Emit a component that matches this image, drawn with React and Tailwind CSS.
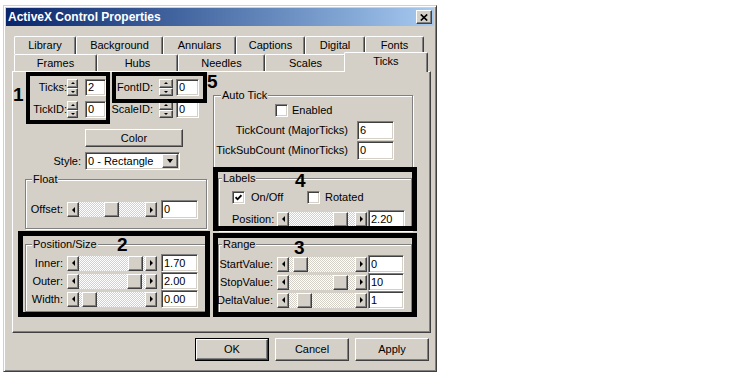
import React from "react";

const raised =
  "border border-t-white border-l-white border-r-[#404040] border-b-[#404040] shadow-[inset_-1px_-1px_0_#808080] bg-[#d4d0c8]";
const sunken =
  "border border-t-[#808080] border-l-[#808080] border-r-white border-b-white shadow-[inset_1px_1px_0_#404040,inset_-1px_-1px_0_#d4d0c8]";

const row1 = [
  ["Library", "w-[62px]"],
  ["Background", "w-[87px]"],
  ["Annulars", "w-[73px]"],
  ["Captions", "w-[69px]"],
  ["Digital", "w-[60px]"],
  ["Fonts", "w-[59px]"],
];
const row2 = [
  ["Frames", "w-[83px]"],
  ["Hubs", "w-[81px]"],
  ["Needles", "w-[87px]"],
  ["Scales", "w-[81px]"],
];

function Tab({ label, w, h }) {
  return (
    <div
      className={
        "shrink-0 flex items-center justify-center border-t border-l border-r border-t-white border-l-white border-r-[#404040] rounded-t-[2px] shadow-[inset_-1px_0_0_#808080] bg-[#d4d0c8] " +
        w +
        " " +
        h
      }
    >
      {label}
    </div>
  );
}

function Label({ w, children, left }) {
  return (
    <span className={"flex whitespace-nowrap shrink-0 " + (left ? "justify-start " : "justify-end ") + w}>
      {children}
    </span>
  );
}

function Field({ className = "", children }) {
  return (
    <div className={sunken + " bg-white shrink-0 flex items-center pl-[2px] " + className}>
      {children}
    </div>
  );
}

function Spin({ w, className = "" }) {
  return (
    <div className={"flex flex-col h-[17px] shrink-0 " + w + " " + className}>
      <div className={raised + " flex-1 flex items-center justify-center"}>
        <div className="w-0 h-0 border-x-[2px] border-x-transparent border-b-[2px] border-b-black" />
      </div>
      <div className={raised + " flex-1 flex items-center justify-center"}>
        <div className="w-0 h-0 border-x-[2px] border-x-transparent border-t-[2px] border-t-black" />
      </div>
    </div>
  );
}

function HScroll({ thumb, className = "" }) {
  return (
    <div className={"flex h-[15px] w-[90px] shrink-0 " + className}>
      <div className={raised + " w-[12px] shrink-0 flex items-center justify-center"}>
        <div className="w-0 h-0 border-y-[3px] border-y-transparent border-r-[3px] border-r-black" />
      </div>
      <div className="flex-1 flex bg-[image:repeating-conic-gradient(#fff_0_25%,#d4d0c8_0_50%)] bg-[length:2px_2px]">
        <div className="shrink-0" style={{ width: thumb - 12 }} />
        <div className={raised + " w-[15px] shrink-0"} />
      </div>
      <div className={raised + " w-[12px] shrink-0 flex items-center justify-center"}>
        <div className="w-0 h-0 border-y-[3px] border-y-transparent border-l-[3px] border-l-black" />
      </div>
    </div>
  );
}

function Check({ on }) {
  return (
    <div className={sunken + " w-[13px] h-[13px] bg-white shrink-0 flex items-center justify-center"}>
      {on && (
        <svg width="7" height="7" viewBox="0 0 7 7">
          <path d="M0.6 3.2 L2.6 5.3 L6.4 1.2" fill="none" stroke="black" strokeWidth="1.8" />
        </svg>
      )}
    </div>
  );
}

function Group({ label, className = "", legend = "ml-[6px]", children }) {
  return (
    <fieldset
      className={
        "min-w-0 border border-[#808080] shadow-[inset_1px_1px_0_#fff,1px_1px_0_#fff] " + className
      }
    >
      <legend className={"px-[1px] leading-[13px] bg-[#d4d0c8] " + legend}>{label}</legend>
      {children}
    </fieldset>
  );
}

function Btn({ children, isDefault }) {
  if (isDefault) {
    return (
      <div className="w-[74px] h-[23px] border border-black">
        <div className={raised + " w-full h-full flex items-center justify-center"}>{children}</div>
      </div>
    );
  }
  return <div className={raised + " w-[74px] h-[23px] flex items-center justify-center"}>{children}</div>;
}

export default function App() {
  return (
    <div className="w-[750px] h-[375px] bg-white pt-[5px] pl-[3px] font-['Liberation_Sans',Arial,sans-serif] text-[11px] text-black leading-none">
      <div className="w-[434px] h-[367px] bg-[#d4d0c8] border border-t-[#d4d0c8] border-l-[#d4d0c8] border-r-[#404040] border-b-[#404040] shadow-[inset_1px_1px_0_#fff,inset_-1px_-1px_0_#808080] p-[2px] flex flex-col">
        {/* Title bar */}
        <div className="h-[18px] shrink-0 flex items-center justify-between bg-linear-to-r from-[#0a246a] to-[#a6caf0] pl-[2px] pr-[2px]">
          <span className="text-white font-bold text-[12px]">ActiveX Control Properties</span>
          <div className={raised + " w-[16px] h-[14px] flex items-center justify-center"}>
            <svg width="8" height="7" viewBox="0 0 8 7">
              <path d="M0.8 0.5 L7.2 6.5 M7.2 0.5 L0.8 6.5" stroke="black" strokeWidth="1.7" />
            </svg>
          </div>
        </div>

        {/* Tabs */}
        <div className="pl-[8px] pt-[10px]">
          <div className="flex h-[18px]">
            {row1.map(([t, w]) => (
              <Tab key={t} label={t} w={w} h="h-[18px]" />
            ))}
          </div>
          <div className="flex h-[17px] items-end">
            {row2.map(([t, w]) => (
              <Tab key={t} label={t} w={w} h="h-[17px]" />
            ))}
            <div className="relative z-10 -ml-[2px] -mb-[1px] w-[84px] h-[20px] shrink-0 flex justify-center pt-[3px] border-t border-l border-r border-t-white border-l-white border-r-[#404040] rounded-t-[2px] shadow-[inset_-1px_0_0_#808080] bg-[#d4d0c8]">
              Ticks
            </div>
          </div>
        </div>

        {/* Panel */}
        <div className="relative ml-[6px] w-[419px] h-[262px] shrink-0 flex border border-t-white border-l-white border-r-[#404040] border-b-[#404040] shadow-[inset_-1px_-1px_0_#808080]">
          {/* Left column */}
          <div className="w-[200px] shrink-0 flex flex-col">
            <div className="mt-[7px] flex flex-col gap-[5px]">
              <div className="flex h-[17px] items-center">
                <Label w="w-[54px]">Ticks:</Label>
                <Spin w="w-[11px]" />
                <Field className="ml-[7px] w-[21px] h-[17px]">2</Field>
                <Label w="w-[47px]">FontID:</Label>
                <Spin w="w-[14px]" className="ml-[6px]" />
                <Field className="ml-[3px] w-[23px] h-[17px]">0</Field>
              </div>
              <div className="flex h-[17px] items-center">
                <Label w="w-[54px]">TickID:</Label>
                <Spin w="w-[11px]" />
                <Field className="ml-[7px] w-[21px] h-[17px]">0</Field>
                <Label w="w-[47px]">ScaleID:</Label>
                <Spin w="w-[14px]" className="ml-[6px]" />
                <Field className="ml-[3px] w-[23px] h-[17px]">0</Field>
              </div>
            </div>

            <div className={raised + " mt-[11px] ml-[72px] w-[98px] h-[18px] flex items-center justify-center"}>
              Color
            </div>

            <div className="mt-[5px] flex h-[18px] items-center">
              <Label w="w-[68px]">Style:</Label>
              <div className={sunken + " ml-[4px] w-[95px] h-[18px] bg-white flex items-center justify-between pl-[2px] pr-[1px]"}>
                <span>0 - Rectangle</span>
                <div className={raised + " w-[16px] h-[14px] flex items-center justify-center"}>
                  <div className="w-0 h-0 border-x-[3.5px] border-x-transparent border-t-[4px] border-t-black" />
                </div>
              </div>
            </div>

            <Group label="Float" className="mt-[3px] ml-[12px] w-[182px]">
              <div className="pt-[14px] pb-[9px] pl-[7px] flex h-[42px] items-start">
                <div className="flex items-center h-[19px]">
                  <Label w="w-[30px]">Offset:</Label>
                  <HScroll thumb={37} className="ml-[4px]" />
                  <Field className="ml-[4px] w-[37px] h-[19px]">0</Field>
                </div>
              </div>
            </Group>

            <Group label="Position/Size" className="mt-[9px] ml-[12px] w-[181px]">
              <div className="pt-[3px] pb-[3px] pl-[7px] flex flex-col">
                {[
                  ["Inner:", 61, "1.70"],
                  ["Outer:", 60, "2.00"],
                  ["Width:", 15, "0.00"],
                ].map(([l, t, v]) => (
                  <div key={l} className="flex h-[18px] items-center">
                    <Label w="w-[30px]">{l}</Label>
                    <HScroll thumb={t} className="ml-[4px]" />
                    <Field className="ml-[4px] w-[37px] h-[18px]">{v}</Field>
                  </div>
                ))}
              </div>
            </Group>
          </div>

          {/* Right column */}
          <div className="w-[204px] shrink-0 flex flex-col">
            <Group label="Auto Tick" className="mt-[17px] w-[200px]" legend="ml-[7px]">
              <div className="pt-[2px] pb-[9px] flex flex-col">
                <div className="flex items-center h-[13px] pl-[61px]">
                  <Check />
                  <span className="ml-[4px]">Enabled</span>
                </div>
                <div className="mt-[4px] flex h-[19px] items-center">
                  <Label w="w-[134px]">TickCount (MajorTicks)</Label>
                  <Field className="ml-[9px] w-[37px] h-[19px]">6</Field>
                </div>
                <div className="mt-[1px] flex h-[19px] items-center">
                  <Label w="w-[134px]">TickSubCount (MinorTicks)</Label>
                  <Field className="ml-[9px] w-[37px] h-[19px]">0</Field>
                </div>
              </div>
            </Group>

            <Group label="Labels" className="mt-[2px] ml-[5px] w-[194px]" legend="ml-[3px]">
              <div className="pt-[6px] pb-[2px] pl-[13px] flex flex-col">
                <div className="flex items-center h-[13px]">
                  <div className="w-[75px] flex items-center">
                    <Check on />
                    <span className="ml-[6px]">On/Off</span>
                  </div>
                  <Check />
                  <span className="ml-[5px]">Rotated</span>
                </div>
                <div className="mt-[6px] flex h-[18px] items-center">
                  <Label w="w-[45px]" left>
                    Position:
                  </Label>
                  <HScroll thumb={56} />
                  <Field className="ml-[1px] w-[37px] h-[18px]">2.20</Field>
                </div>
              </div>
            </Group>

            <Group label="Range" className="mt-[7px] ml-[5px] w-[194px]" legend="ml-[3px]">
              <div className="pt-[4px] pb-[3px] flex flex-col">
                {[
                  ["StartValue:", 16, "0"],
                  ["StopValue:", 56, "10"],
                  ["DeltaValue:", 20, "1"],
                ].map(([l, t, v]) => (
                  <div key={l} className="flex h-[18px] items-center">
                    <Label w="w-[54px]">{l}</Label>
                    <HScroll thumb={t} className="ml-[4px]" />
                    <Field className="ml-[1px] w-[36px] h-[18px]">{v}</Field>
                  </div>
                ))}
              </div>
            </Group>
          </div>

          {/* Annotation boxes */}
          <div className="absolute left-[13px] top-0 w-[84px] h-[52px] border-[4px] border-black" />
          <div className="absolute left-[99px] top-0 w-[95px] h-[31px] border-[4px] border-black" />
          <div className="absolute left-[5px] top-[159px] w-[192px] h-[86px] border-[5px] border-black" />
          <div className="absolute left-[200px] top-[95px] w-[204px] h-[64px] border-[5px] border-black" />
          <div className="absolute left-[200px] top-[161px] w-[204px] h-[84px] border-[5px] border-black" />

          <span className="absolute left-0 top-[13px] text-[19px] font-bold leading-none">1</span>
          <span className="absolute left-[194px] top-0 text-[19px] font-bold leading-none">5</span>
          <span className="absolute left-[104px] top-[163px] text-[19px] font-bold leading-none">2</span>
          <span className="absolute left-[282px] top-[99px] text-[19px] font-bold leading-none">4</span>
          <span className="absolute left-[281px] top-[166px] text-[19px] font-bold leading-none">3</span>
        </div>

        {/* Buttons */}
        <div className="mt-[5px] flex justify-end gap-[6px] pr-[5px]">
          <Btn isDefault>OK</Btn>
          <Btn>Cancel</Btn>
          <Btn>Apply</Btn>
        </div>
      </div>
    </div>
  );
}
